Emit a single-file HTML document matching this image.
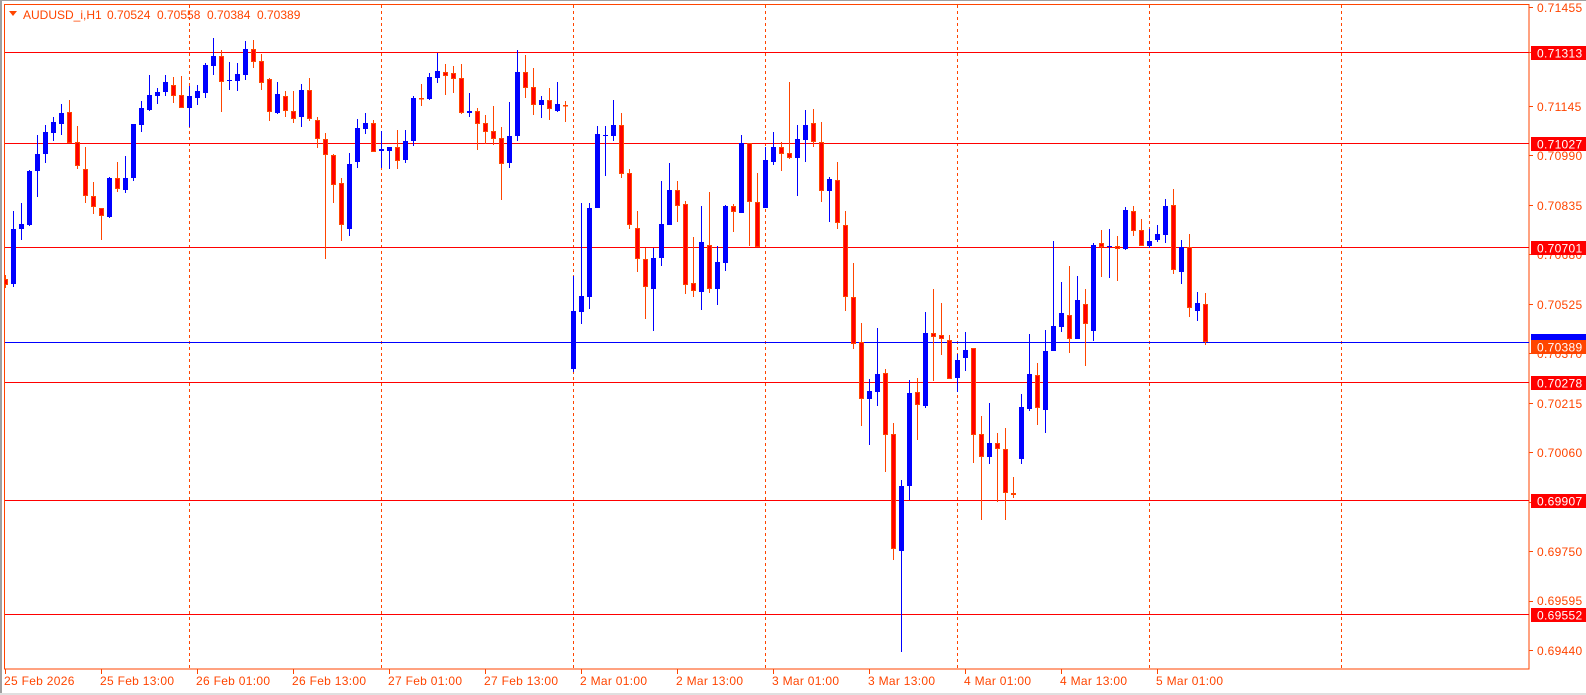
<!DOCTYPE html>
<html><head><meta charset="utf-8"><style>
html,body{margin:0;padding:0;background:#fff;width:1586px;height:695px;overflow:hidden}
svg{display:block}
text{font-family:"Liberation Sans",sans-serif;font-size:12px}
</style></head><body>
<svg width="1586" height="695" viewBox="0 0 1586 695" xmlns="http://www.w3.org/2000/svg" shape-rendering="crispEdges">
<defs><clipPath id="c"><rect x="5" y="5" width="1524" height="664"/></clipPath></defs>
<rect x="0" y="0" width="1586" height="695" fill="#fff"/>
<rect x="0" y="0" width="1586" height="1" fill="#a0a0a0"/>
<rect x="0" y="0" width="2" height="695" fill="#a0a0a0"/>
<rect x="0" y="693" width="1586" height="2" fill="#e0e0e0"/>
<!-- frame -->
<rect x="4.5" y="4.5" width="1524.5" height="664.5" fill="none" stroke="#ff4500"/>
<g clip-path="url(#c)">
<!-- separators -->
<g stroke="#ff4500" stroke-dasharray="3,3">
<path d="M189.5 5V669M381.5 5V669M573.5 5V669M765.5 5V669M957.5 5V669M1149.5 5V669M1341.5 5V669"/>
</g>
<!-- level lines -->
<g stroke="#ff0000"><path d="M5 52.5H1529M5 143.5H1529M5 247.5H1529M5 382.5H1529M5 500.5H1529M5 614.5H1529"/></g>
<path d="M5 342.5H1529" stroke="#0000ff"/>
<!-- bull candles -->
<g stroke="#0000ff" fill="#0000ff">
<path d="M13.5 211V287M21.5 203V240M29.5 170V226M37.5 135V197M45.5 125V163M53.5 117V141M61.5 104V135M109.5 177V218M125.5 156V193M133.5 124V181M141.5 101V132M149.5 75V111M157.5 88V104M165.5 75V96M189.5 86V127M197.5 85V105M205.5 63V98M213.5 38V75M229.5 62V90M237.5 63V91M245.5 41V80M277.5 82V114M301.5 84V127M349.5 153V236M357.5 119V168M365.5 113V134M381.5 131V168M389.5 147V169M405.5 130V163M413.5 96V146M429.5 73V100M437.5 53V83M469.5 93V117M509.5 102V168M517.5 50V141M541.5 96V118M557.5 82V112M573.5 276V372M581.5 203V324M589.5 203V309M597.5 126V208M605.5 126V176M613.5 100V141M653.5 248V331M661.5 181V266M669.5 163V225M701.5 206V310M717.5 246V305M725.5 205V271M741.5 135V213M765.5 147V208M773.5 132V165M797.5 125V196M805.5 110V162M829.5 177V222M869.5 379V445M877.5 328V406M901.5 480V652M909.5 380V500M925.5 312V408M957.5 354V392M965.5 332V371M989.5 403V464M1021.5 394V464M1029.5 334V411M1045.5 330V433M1053.5 241V351M1061.5 282V332M1077.5 276V339M1093.5 243V341M1109.5 229V278M1125.5 207V250M1149.5 229V248M1157.5 225V242M1165.5 199V243M1181.5 240V284M1197.5 292V321" fill="none"/>
<g stroke="none">
<rect x="11" y="229" width="5" height="55"/><rect x="19" y="224" width="5" height="5"/><rect x="27" y="171" width="5" height="54"/><rect x="35" y="154" width="5" height="17"/><rect x="43" y="132" width="5" height="22"/><rect x="51" y="122" width="5" height="11"/><rect x="59" y="113" width="5" height="11"/><rect x="107" y="178" width="5" height="39"/><rect x="123" y="178" width="5" height="12"/><rect x="131" y="124" width="5" height="54"/><rect x="139" y="108" width="5" height="17"/><rect x="147" y="95" width="5" height="15"/><rect x="155" y="92" width="5" height="4"/><rect x="163" y="82" width="5" height="10"/><rect x="187" y="96" width="5" height="12"/><rect x="195" y="91" width="5" height="7"/><rect x="203" y="65" width="5" height="28"/><rect x="211" y="56" width="5" height="10"/><rect x="227" y="80" width="5" height="1"/><rect x="235" y="74" width="5" height="7"/><rect x="243" y="49" width="5" height="26"/><rect x="275" y="94" width="5" height="19"/><rect x="299" y="90" width="5" height="27"/><rect x="347" y="164" width="5" height="65"/><rect x="355" y="128" width="5" height="34"/><rect x="363" y="123" width="5" height="6"/><rect x="379" y="149" width="5" height="2"/><rect x="387" y="147" width="5" height="4"/><rect x="403" y="141" width="5" height="19"/><rect x="411" y="98" width="5" height="43"/><rect x="427" y="77" width="5" height="22"/><rect x="435" y="71" width="5" height="7"/><rect x="467" y="111" width="5" height="2"/><rect x="507" y="136" width="5" height="27"/><rect x="515" y="72" width="5" height="64"/><rect x="539" y="100" width="5" height="5"/><rect x="555" y="104" width="5" height="7"/><rect x="571" y="311" width="5" height="58"/><rect x="579" y="296" width="5" height="16"/><rect x="587" y="208" width="5" height="89"/><rect x="595" y="134" width="5" height="74"/><rect x="603" y="135" width="5" height="1"/><rect x="611" y="125" width="5" height="11"/><rect x="651" y="258" width="5" height="31"/><rect x="659" y="224" width="5" height="34"/><rect x="667" y="190" width="5" height="35"/><rect x="699" y="242" width="5" height="50"/><rect x="715" y="262" width="5" height="27"/><rect x="723" y="206" width="5" height="57"/><rect x="739" y="143" width="5" height="70"/><rect x="763" y="160" width="5" height="48"/><rect x="771" y="147" width="5" height="15"/><rect x="795" y="139" width="5" height="19"/><rect x="803" y="125" width="5" height="15"/><rect x="827" y="179" width="5" height="12"/><rect x="867" y="391" width="5" height="8"/><rect x="875" y="374" width="5" height="18"/><rect x="899" y="486" width="5" height="65"/><rect x="907" y="393" width="5" height="93"/><rect x="923" y="333" width="5" height="73"/><rect x="955" y="360" width="5" height="18"/><rect x="963" y="350" width="5" height="8"/><rect x="987" y="443" width="5" height="14"/><rect x="1019" y="407" width="5" height="52"/><rect x="1027" y="374" width="5" height="35"/><rect x="1043" y="351" width="5" height="59"/><rect x="1051" y="326" width="5" height="25"/><rect x="1059" y="313" width="5" height="14"/><rect x="1075" y="300" width="5" height="39"/><rect x="1091" y="245" width="5" height="86"/><rect x="1107" y="246" width="5" height="1"/><rect x="1123" y="210" width="5" height="39"/><rect x="1147" y="241" width="5" height="5"/><rect x="1155" y="234" width="5" height="6"/><rect x="1163" y="206" width="5" height="29"/><rect x="1179" y="247" width="5" height="25"/><rect x="1195" y="303" width="5" height="8"/>
</g></g>
<!-- bear candles -->
<g stroke="#ff4500">
<path d="M5.5 275V288M69.5 100V143M77.5 126V169M85.5 147V203M93.5 182V214M101.5 208V240M117.5 162V192M173.5 77V103M181.5 76V108M221.5 50V112M253.5 40V68M261.5 54V90M269.5 78V121M285.5 91V117M293.5 91V123M309.5 78V121M317.5 117V148M325.5 133V259M333.5 154V203M341.5 178V241M373.5 120V152M397.5 130V169M421.5 84V106M445.5 64V95M453.5 66V93M461.5 64V114M477.5 108V150M485.5 115V144M493.5 106V145M501.5 127V200M525.5 55V98M533.5 68V115M549.5 88V120M565.5 101V122M621.5 113V178M629.5 169V229M637.5 211V272M645.5 248V319M677.5 181V222M685.5 201V294M693.5 237V297M709.5 192V293M733.5 204V232M749.5 143V246M757.5 173V247M781.5 142V171M789.5 82V159M813.5 109V147M821.5 122V202M837.5 162V229M845.5 211V311M853.5 263V349M861.5 323V426M885.5 369V472M893.5 423V560M917.5 378V440M933.5 289V381M941.5 303V355M949.5 335V379M973.5 348V463M981.5 416V520M997.5 433V502M1005.5 428V520M1013.5 477V498M1037.5 363V425M1069.5 266V353M1085.5 289V366M1101.5 230V277M1117.5 236V281M1133.5 206V236M1141.5 219V246M1173.5 189V274M1189.5 234V317M1205.5 293V345" fill="none"/>
<g fill="#ff0000">
<rect x="3.5" y="279.5" width="4" height="5"/><rect x="67.5" y="112.5" width="4" height="30"/><rect x="75.5" y="142.5" width="4" height="23"/><rect x="83.5" y="169.5" width="4" height="26"/><rect x="91.5" y="196.5" width="4" height="10"/><rect x="99.5" y="208.5" width="4" height="7"/><rect x="115.5" y="178.5" width="4" height="10"/><rect x="171.5" y="85.5" width="4" height="10"/><rect x="179.5" y="95.5" width="4" height="12"/><rect x="219.5" y="56.5" width="4" height="25"/><rect x="251.5" y="49.5" width="4" height="12"/><rect x="259.5" y="61.5" width="4" height="21"/><rect x="267.5" y="79.5" width="4" height="32"/><rect x="283.5" y="96.5" width="4" height="14"/><rect x="291.5" y="111.5" width="4" height="7"/><rect x="307.5" y="90.5" width="4" height="28"/><rect x="315.5" y="120.5" width="4" height="18"/><rect x="323.5" y="139.5" width="4" height="15"/><rect x="331.5" y="155.5" width="4" height="29"/><rect x="339.5" y="183.5" width="4" height="41"/><rect x="371.5" y="123.5" width="4" height="28"/><rect x="395.5" y="147.5" width="4" height="13"/><rect x="419.5" y="98.5" width="4" height="0.5"/><rect x="443.5" y="72.5" width="4" height="3"/><rect x="451.5" y="73.5" width="4" height="5"/><rect x="459.5" y="78.5" width="4" height="34"/><rect x="475.5" y="111.5" width="4" height="12"/><rect x="483.5" y="123.5" width="4" height="8"/><rect x="491.5" y="131.5" width="4" height="7"/><rect x="499.5" y="138.5" width="4" height="25"/><rect x="523.5" y="72.5" width="4" height="15"/><rect x="531.5" y="87.5" width="4" height="17"/><rect x="547.5" y="100.5" width="4" height="8"/><rect x="563.5" y="105.5" width="4" height="0.5"/><rect x="619.5" y="125.5" width="4" height="48"/><rect x="627.5" y="173.5" width="4" height="51"/><rect x="635.5" y="228.5" width="4" height="30"/><rect x="643.5" y="259.5" width="4" height="27"/><rect x="675.5" y="190.5" width="4" height="15"/><rect x="683.5" y="204.5" width="4" height="80"/><rect x="691.5" y="283.5" width="4" height="7"/><rect x="707.5" y="245.5" width="4" height="43"/><rect x="731.5" y="206.5" width="4" height="5"/><rect x="747.5" y="143.5" width="4" height="58"/><rect x="755.5" y="202.5" width="4" height="44"/><rect x="779.5" y="147.5" width="4" height="6"/><rect x="787.5" y="153.5" width="4" height="4"/><rect x="811.5" y="123.5" width="4" height="18"/><rect x="819.5" y="142.5" width="4" height="48"/><rect x="835.5" y="180.5" width="4" height="42"/><rect x="843.5" y="225.5" width="4" height="71"/><rect x="851.5" y="297.5" width="4" height="46"/><rect x="859.5" y="342.5" width="4" height="56"/><rect x="883.5" y="373.5" width="4" height="61"/><rect x="891.5" y="434.5" width="4" height="114"/><rect x="915.5" y="392.5" width="4" height="12"/><rect x="931.5" y="333.5" width="4" height="3"/><rect x="939.5" y="335.5" width="4" height="3"/><rect x="947.5" y="340.5" width="4" height="38"/><rect x="971.5" y="348.5" width="4" height="86"/><rect x="979.5" y="434.5" width="4" height="22"/><rect x="995.5" y="443.5" width="4" height="5"/><rect x="1003.5" y="449.5" width="4" height="43"/><rect x="1011.5" y="493.5" width="4" height="1"/><rect x="1035.5" y="375.5" width="4" height="32"/><rect x="1067.5" y="315.5" width="4" height="23"/><rect x="1083.5" y="304.5" width="4" height="19"/><rect x="1099.5" y="243.5" width="4" height="3"/><rect x="1115.5" y="246.5" width="4" height="2"/><rect x="1131.5" y="211.5" width="4" height="19"/><rect x="1139.5" y="230.5" width="4" height="15"/><rect x="1171.5" y="205.5" width="4" height="64"/><rect x="1187.5" y="247.5" width="4" height="60"/><rect x="1203.5" y="304.5" width="4" height="37"/>
</g></g>
</g>
<!-- header -->
<path d="M9 11H17L13 16Z" fill="#ff4500" shape-rendering="auto"/>
<g fill="#ff4500" shape-rendering="auto">
<text x="23" y="19" font-size="11.5">AUDUSD_i,H1</text>
<text x="107" y="19">0.70524</text><text x="157" y="19">0.70558</text><text x="207" y="19">0.70384</text><text x="257" y="19">0.70389</text>
</g>
<!-- price axis -->
<g stroke="#ff4500"><path d="M1529 7.5H1533M1529 52.5H1533M1529 106.5H1533M1529 155.5H1533M1529 205.5H1533M1529 254.5H1533M1529 304.5H1533M1529 353.5H1533M1529 403.5H1533M1529 452.5H1533M1529 502.5H1533M1529 551.5H1533M1529 601.5H1533M1529 650.5H1533"/></g>
<g fill="#ff4500" shape-rendering="auto" letter-spacing="0.3">
<text x="1537" y="12">0.71455</text><text x="1537" y="57">0.71300</text><text x="1537" y="111">0.71145</text><text x="1537" y="160">0.70990</text><text x="1537" y="210">0.70835</text><text x="1537" y="259">0.70680</text><text x="1537" y="309">0.70525</text><text x="1537" y="358">0.70370</text><text x="1537" y="408">0.70215</text><text x="1537" y="457">0.70060</text><text x="1537" y="506">0.69905</text><text x="1537" y="556">0.69750</text><text x="1537" y="605">0.69595</text><text x="1537" y="655">0.69440</text>
</g>
<g fill="#ff0000">
<rect x="1531" y="46" width="55" height="14"/><rect x="1531" y="137" width="55" height="14"/><rect x="1531" y="241" width="55" height="14"/><rect x="1531" y="376" width="55" height="14"/><rect x="1531" y="494" width="55" height="14"/><rect x="1531" y="608" width="55" height="14"/>
</g>
<rect x="1531" y="334" width="55" height="14" fill="#0000ff"/>
<rect x="1531" y="340" width="55" height="14" fill="#ff4500"/>
<g fill="#ffffff" shape-rendering="auto" letter-spacing="0.3">
<text x="1537" y="57.5">0.71313</text><text x="1537" y="148.5">0.71027</text><text x="1537" y="252.5">0.70701</text><text x="1537" y="351.5">0.70389</text><text x="1537" y="387.5">0.70278</text><text x="1537" y="505.5">0.69907</text><text x="1537" y="619.5">0.69552</text>
</g>
<!-- time axis -->
<g stroke="#ff4500"><path d="M5.5 669V674M101.5 669V674M197.5 669V674M293.5 669V674M389.5 669V674M485.5 669V674M581.5 669V674M677.5 669V674M773.5 669V674M869.5 669V674M965.5 669V674M1061.5 669V674M1157.5 669V674"/></g>
<g fill="#ff4500" shape-rendering="auto" letter-spacing="0.3">
<text x="4" y="685">25 Feb 2026</text><text x="100" y="685">25 Feb 13:00</text><text x="196" y="685">26 Feb 01:00</text><text x="292" y="685">26 Feb 13:00</text><text x="388" y="685">27 Feb 01:00</text><text x="484" y="685">27 Feb 13:00</text><text x="580" y="685">2 Mar 01:00</text><text x="676" y="685">2 Mar 13:00</text><text x="772" y="685">3 Mar 01:00</text><text x="868" y="685">3 Mar 13:00</text><text x="964" y="685">4 Mar 01:00</text><text x="1060" y="685">4 Mar 13:00</text><text x="1156" y="685">5 Mar 01:00</text>
</g>
</svg>
</body></html>
